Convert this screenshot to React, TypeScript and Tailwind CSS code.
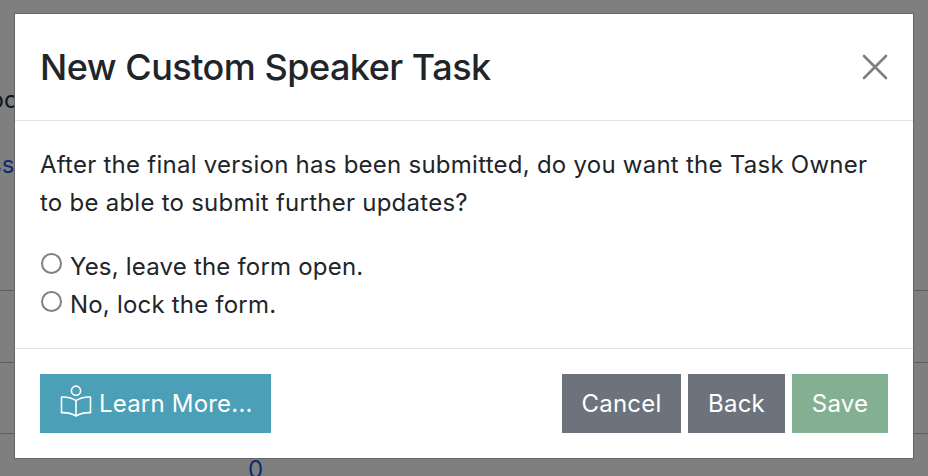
export default function App() {
  return (
    <div className="relative h-[476px] w-[928px] overflow-hidden bg-[#7f7f7f] font-['Inter',sans-serif]">
      {/* page behind the dialog */}
      <div className="flex h-full flex-col">
        <div className="h-[82px] shrink-0" />
        <div className="h-[36px] shrink-0 text-[24px] leading-[36px] text-[#121416]">
          <span className="-ml-[18px] inline-block">too</span>
        </div>
        <div className="mt-[29px] h-[36px] shrink-0 text-[24px] leading-[36px] text-[#12296b]">
          <span className="-ml-[11px] inline-block">ss</span>
        </div>
        <div className="h-[108px] shrink-0 border-b border-[#5f5f5f]" />
        <div className="h-[72px] shrink-0 border-b border-[#5f5f5f]" />
        <div className="h-[71px] shrink-0 border-b border-[#5f5f5f]" />
        <div className="mt-[18px] pl-[248px] text-[24px] leading-[36px] text-[#12296b]">0</div>
      </div>

      {/* dialog */}
      <div className="absolute left-[14px] top-[13px] flex h-[446px] w-[900px] flex-col border border-[#666666] bg-white text-[#212529]">
        <div className="flex h-[107px] shrink-0 items-center justify-between border-b border-[#dee2e6] pl-[25px] pr-[24px]">
          <h5 className="text-[36px] font-medium leading-[54px] tracking-[-0.5px]">New Custom Speaker Task</h5>
          <svg width="28" height="28" viewBox="0 0 28 28" fill="none" stroke="#7f7f7f" strokeWidth="2.6" strokeLinecap="round" aria-label="Close">
            <path d="M3 3 L25 25 M25 3 L3 25" />
          </svg>
        </div>
        <div className="flex h-[228px] shrink-0 flex-col border-b border-[#dee2e6] pl-[25px] pr-[24px] pt-[25px] text-[24px] leading-[38px] tracking-[0.25px]">
          <p className="m-0">After the final version has been submitted, do you want the Task Owner to be able to submit further updates?</p>
          <div className="mt-[26px] flex flex-col tracking-[0.2px]">
            <label className="flex h-[38px] items-center">
              <span className="mb-[8px] ml-px h-[21px] w-[21px] shrink-0 rounded-full border-2 border-[#808080] bg-white" />
              <span className="ml-[8px]">Yes, leave the form open.</span>
            </label>
            <label className="flex h-[38px] items-center">
              <span className="mb-[8px] ml-px h-[21px] w-[21px] shrink-0 rounded-full border-2 border-[#808080] bg-white" />
              <span className="ml-[8px]">No, lock the form.</span>
            </label>
          </div>
        </div>
        <div className="flex flex-1 items-start justify-between pl-[25px] pr-[25px] pt-[25px] text-[24px] leading-[36px] tracking-[0.2px] text-white">
          <button className="flex h-[59px] w-[231px] items-center bg-[#4ba0b7] pl-[20px]">
            <svg width="32" height="32" viewBox="0 0 32 32" fill="none" stroke="white" strokeWidth="1.6" strokeLinejoin="round" className="mb-[5px] shrink-0">
              <circle cx="16" cy="5.7" r="4.6" />
              <path d="M16 31 C12 28.7 6 27.5 1.5 27.7 V12 C6 11.8 12 12.8 16 15.7 C20 12.8 26 11.8 30.5 12 V27.7 C26 27.5 20 28.7 16 31 Z" />
              <path d="M16 15.7 V31" />
            </svg>
            <span className="ml-[7px]">Learn More...</span>
          </button>
          <div className="flex gap-[7px]">
            <button className="h-[59px] w-[119px] bg-[#6c737c]">Cancel</button>
            <button className="h-[59px] w-[97px] bg-[#6c737c]">Back</button>
            <button className="h-[59px] w-[96px] bg-[#83b093]">Save</button>
          </div>
        </div>
      </div>
    </div>
  );
}
